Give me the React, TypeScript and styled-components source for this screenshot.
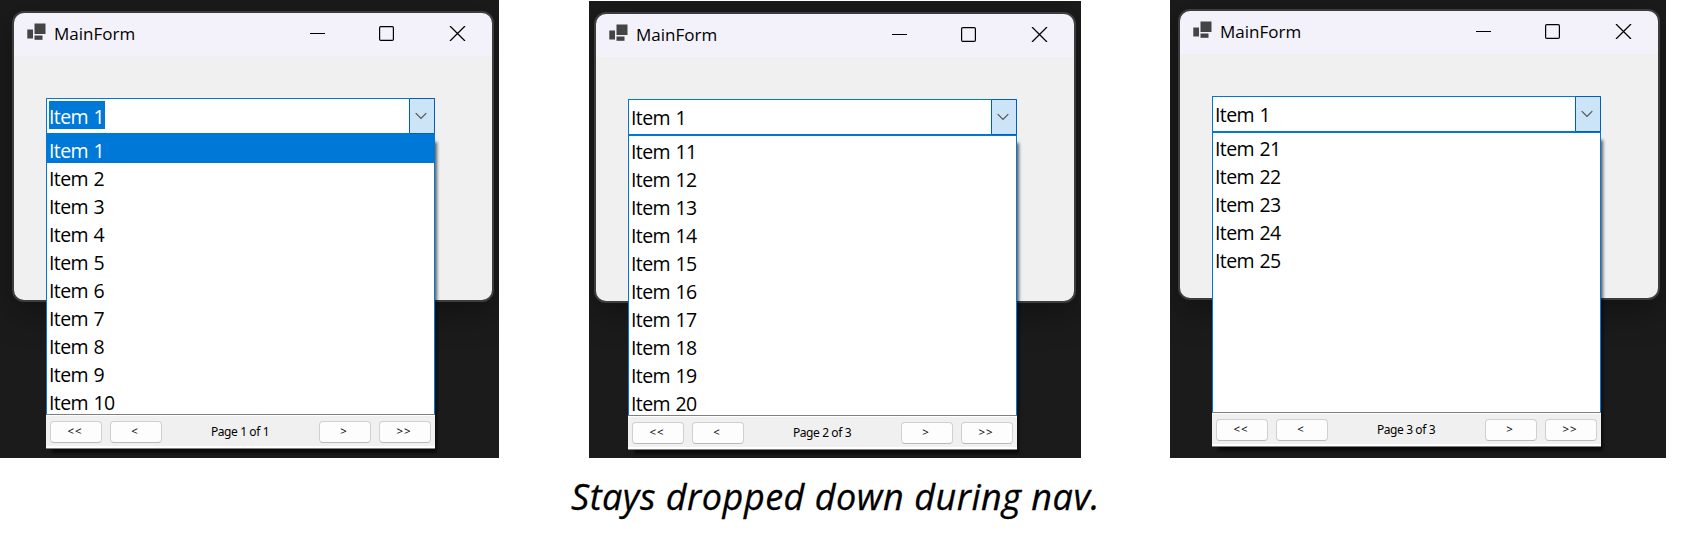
import React from "react";
import styled, { createGlobalStyle } from "styled-components";

const Global = createGlobalStyle`
  * { box-sizing: border-box; }
  body { margin: 0; background: #fff; font-family: "Noto Sans", "Open Sans", sans-serif; color: #000; }
`;

const Page = styled.main`
  width: 1707px;
  height: 536px;
  overflow: hidden;
  background: #fff;
`;

const Gallery = styled.div`
  display: flex;
  align-items: flex-end;
  height: 458px;
`;

const Desktop = styled.section<{ $w: number; $h: number; $gap: number; $top: number; $left: number }>`
  flex: none;
  width: ${(p) => p.$w}px;
  height: ${(p) => p.$h}px;
  margin-left: ${(p) => p.$gap}px;
  padding: ${(p) => p.$top}px 0 0 ${(p) => p.$left}px;
  background: #1b1b1b;
  overflow: hidden;
`;

const FormWindow = styled.div`
  width: 482px;
  height: 291px;
  border: 2px solid #3d3d3d;
  border-radius: 12px;
  background: linear-gradient(#f3f1f9 43px, #f0f0f0 43px);
  box-shadow: 0 10px 34px rgba(0, 0, 0, 0.35);
`;

const TitleBar = styled.header`
  display: flex;
  align-items: center;
  height: 43px;
  padding: 0 26px 0 13px;
  > svg { margin-top: -5px; }
`;

const Title = styled.span`
  margin: -1px auto 0 8px;
  font-family: "Open Sans", "Noto Sans", sans-serif;
  font-size: 17px;
  line-height: 24px;
  letter-spacing: 0;
`;

const WindowControls = styled.div`
  display: flex;
  gap: 54px;
  margin-top: -3px;
  svg { display: block; }
  svg:last-child { margin-left: 1px; }
`;

const Body = styled.div`
  padding: 42px 0 0 32px;
`;

const Combo = styled.div`
  position: relative;
  display: flex;
  width: 389px;
  height: 36px;
  border: 1px solid #0078d7;
  background: #fff;
`;

const Value = styled.div`
  flex: 1;
  padding: 2px;
`;

const ValueText = styled.span<{ $selected: boolean }>`
  display: inline-block;
  width: 56px;
  height: 28px;
  font-family: "Open Sans", "Noto Sans", sans-serif;
  font-size: 19.5px;
  line-height: 31px;
  letter-spacing: -0.6px;
  word-spacing: 1px;
  white-space: nowrap;
  background: ${(p) => (p.$selected ? "#0078d7" : "transparent")};
  color: ${(p) => (p.$selected ? "#fff" : "#000")};
`;

const DropButton = styled.div`
  display: flex;
  align-items: center;
  justify-content: center;
  width: 26px;
  height: 36px;
  margin: -1px -1px 0 0;
  padding: 0 2px 1px 0;
  border: 1px solid #005fb8;
  border-radius: 1px;
  background: #cce4f7;
`;

const Popup = styled.div`
  position: absolute;
  top: 35px;
  left: -1px;
  width: 389px;
  height: 315px;
  box-shadow: 4px 6px 3px -2px rgba(0, 0, 0, 0.6);
`;

const List = styled.ul`
  height: 280px;
  margin: 0;
  padding: 0;
  list-style: none;
  border: solid #0078d7;
  border-width: 1px 1px 0;
  background: #fff;
`;

const Item = styled.li<{ $selected: boolean }>`
  height: 28px;
  padding: 2px 0 0 2px;
  font-family: "Open Sans", "Noto Sans", sans-serif;
  font-size: 19.5px;
  line-height: 27px;
  letter-spacing: -0.6px;
  word-spacing: 1px;
  background: ${(p) => (p.$selected ? "#0078d7" : "transparent")};
  color: ${(p) => (p.$selected ? "#fff" : "#000")};
`;

const Pager = styled.footer`
  position: relative;
  display: flex;
  align-items: center;
  gap: 8px;
  height: 35px;
  padding: 0 4px;
  border: solid #808080;
  border-width: 1px 0;
  background: linear-gradient(#fff 1px, #f0f0f0 1px, #f0f0f0 31px, #fff 31px);
`;

const PageButton = styled.button`
  width: 52px;
  height: 22px;
  padding: 0 2px 1px 0;
  border: 1px solid #d0d0d0;
  border-bottom-color: #bababa;
  border-radius: 4px;
  background: #fdfdfd;
  font: 11.5px/16px "Noto Sans", sans-serif;
  letter-spacing: 1px;
  color: #000;
`;

const PageLabel = styled.span`
  flex: 1;
  padding: 1px 1px 0 0;
  text-align: center;
  font: 12px/16px "Noto Sans", sans-serif;
  letter-spacing: -0.4px;
`;

const Caption = styled.p`
  width: 560px;
  margin: 14px 0 0 571px;
  font: italic 36px/50px "Open Sans", "Noto Sans", sans-serif;
  letter-spacing: 0.5px;
  -webkit-text-stroke: 0.3px #000;
  white-space: nowrap;
`;

const FormIcon = () => (
  <svg width="19" height="18" viewBox="0 0 19 18" fill="#444">
    <rect x="7.5" y="0.5" width="11" height="10.5" />
    <rect x="0.3" y="6.5" width="5.7" height="9" />
    <rect x="7.5" y="12.5" width="8" height="4.3" />
  </svg>
);

type DesktopProps = {
  w: number;
  h: number;
  gap: number;
  top: number;
  left: number;
  first: number;
  last: number;
  label: string;
  active?: boolean;
};

function DesktopShot({ w, h, gap, top, left, first, last, label, active = false }: DesktopProps) {
  const numbers = Array.from({ length: last - first + 1 }, (_, i) => first + i);
  return (
    <Desktop $w={w} $h={h} $gap={gap} $top={top} $left={left}>
      <FormWindow>
        <TitleBar>
          <FormIcon />
          <Title>MainForm</Title>
          <WindowControls>
            <svg width="15" height="15"><path d="M0 7.5H15" stroke="#000" /></svg>
            <svg width="15" height="15"><rect x=".6" y=".6" width="13.8" height="13.8" rx="1.2" fill="none" stroke="#000" strokeWidth="1.2" /></svg>
            <svg width="17" height="15" viewBox="-1 0 17 15"><path d="M0 0L15 15M15 0L0 15" stroke="#000" strokeWidth="1.3" /></svg>
          </WindowControls>
        </TitleBar>
        <Body>
          <Combo>
            <Value><ValueText $selected={active}>Item 1</ValueText></Value>
            <DropButton>
              <svg width="12" height="8"><path d="M.7 1.2L6 6.5L11.3 1.2" fill="none" stroke="#555" strokeWidth="1.2" /></svg>
            </DropButton>
            <Popup>
              <List>
                {numbers.map((n) => (
                  <Item key={n} $selected={active && n === first}>Item {n}</Item>
                ))}
              </List>
              <Pager>
                <PageButton>&lt;&lt;</PageButton>
                <PageButton>&lt;</PageButton>
                <PageLabel>{label}</PageLabel>
                <PageButton>&gt;</PageButton>
                <PageButton>&gt;&gt;</PageButton>
              </Pager>
            </Popup>
          </Combo>
        </Body>
      </FormWindow>
    </Desktop>
  );
}

export default function App() {
  return (
    <Page>
      <Global />
      <Gallery>
        <DesktopShot w={499} h={458} gap={0} top={11} left={12} first={1} last={10} label="Page 1 of 1" active />
        <DesktopShot w={492} h={457} gap={90} top={11} left={5} first={11} last={20} label="Page 2 of 3" />
        <DesktopShot w={496} h={458} gap={89} top={9} left={8} first={21} last={25} label="Page 3 of 3" />
      </Gallery>
      <Caption>Stays dropped down during nav.</Caption>
    </Page>
  );
}
